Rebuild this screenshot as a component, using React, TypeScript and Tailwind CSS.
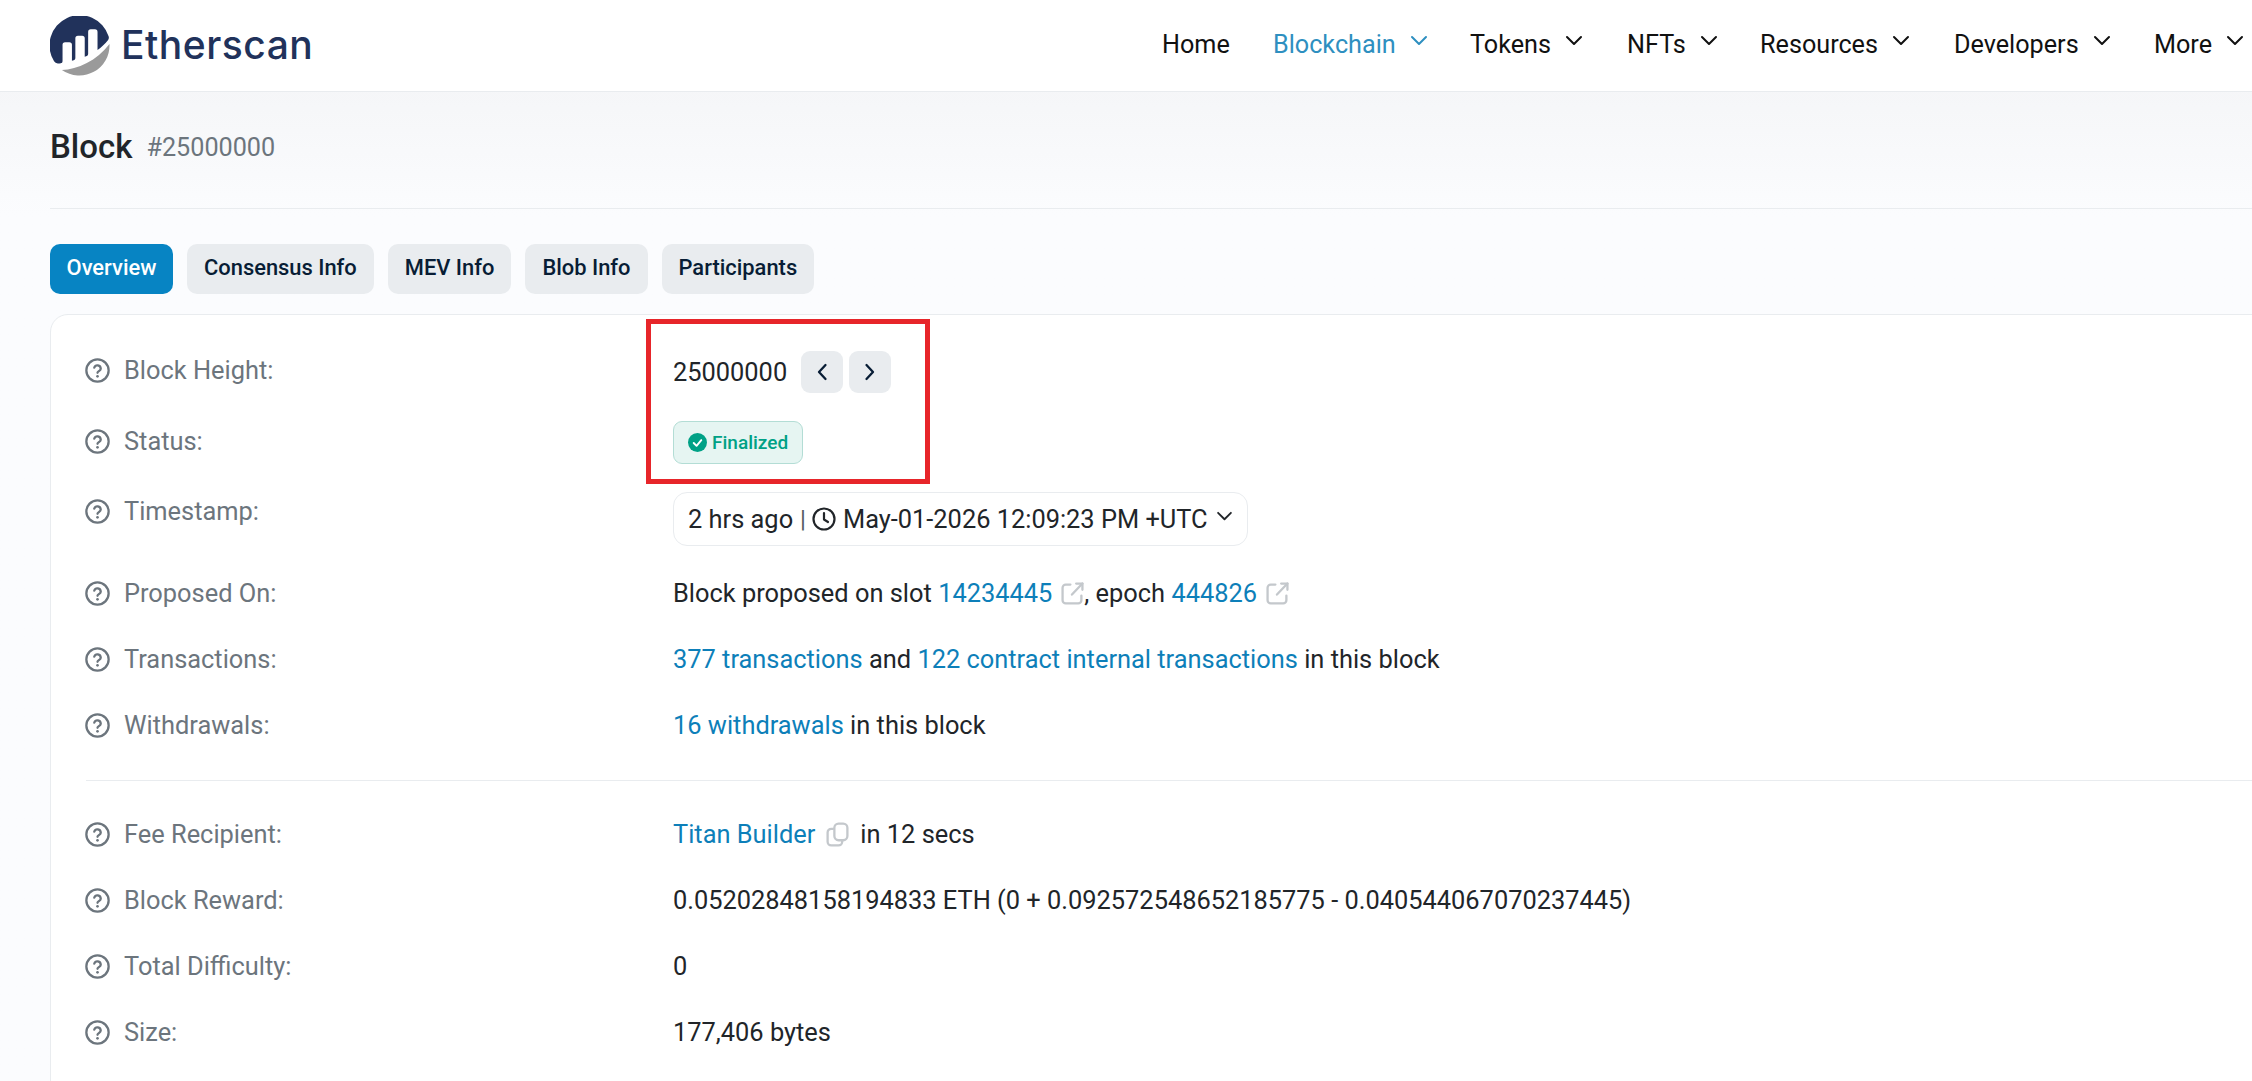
const Help = () => (
  <svg viewBox="0 0 24 24" className="w-[25px] h-[25px] shrink-0 -ml-[1px]" fill="none" stroke="#6c757d" strokeWidth="2.2" strokeLinecap="round" strokeLinejoin="round">
    <circle cx="12" cy="12" r="10.7" />
    <path d="M8.9 9.2a3.2 3.2 0 0 1 6.2 1c0 2.1-3.1 2.6-3.1 4" />
    <path d="M12 17.6h.01" strokeWidth="2.6" />
  </svg>
);

const External = () => (
  <svg viewBox="1 1 22 22" className="inline-block w-[23px] h-[23px] ml-[9px] -mt-[3px] align-middle" fill="none" stroke="#c4c8cc" strokeWidth="2.2" strokeLinecap="round" strokeLinejoin="round">
    <path d="M10 3.5H5.5a3 3 0 0 0-3 3v12a3 3 0 0 0 3 3h12a3 3 0 0 0 3-3V14" />
    <path d="M11.500 13 21.500 2.500" />
    <path d="M15.500 2.500h6v6" />
  </svg>
);

const Copy = () => (
  <svg viewBox="1 0 22 24" className="inline-block w-[23px] h-[25px] ml-[11px] mr-[11px] -mt-[3px] align-middle" fill="none" stroke="#c4c8cc" strokeWidth="2.2" strokeLinecap="round" strokeLinejoin="round">
    <rect x="9" y="1.500" width="12.500" height="16" rx="4" />
    <path d="M8 6.500H6a3.500 3.500 0 0 0-3.500 3.500v9a3.500 3.500 0 0 0 3.500 3.500h7a3.500 3.500 0 0 0 3.500-3.500v-1" />
  </svg>
);

const Chevron = ({ color = '#111' }: { color?: string }) => (
  <svg viewBox="0 0 18 12" className="w-[18px] h-[12px] mb-[6px]" fill="none" stroke={color} strokeWidth="2" strokeLinecap="round" strokeLinejoin="round">
    <path d="M2 2l7 7 7-7" />
  </svg>
);

const Logo = () => (
  <svg viewBox="0 0 121 121" className="w-[60px] h-[60px] shrink-0">
    <path
      d="M25.3 57.900a5.160 5.160 0 0 1 5.180-5.160l8.590.03a5.160 5.160 0 0 1 5.160 5.160V90.400c1-.29 2.200-.6 3.570-.92a4.400 4.400 0 0 0 3.320-4.190V45a5.160 5.160 0 0 1 5.160-5.160h8.600a5.160 5.160 0 0 1 5.160 5.160V82.400s2.150-.87 4.250-1.760a4.400 4.400 0 0 0 2.630-3.970V32.100a5.160 5.160 0 0 1 5.160-5.160h8.600a5.160 5.160 0 0 1 5.160 5.160V68.800c7.460-5.400 15-11.900 21.020-19.700a8.800 8.800 0 0 0 1.320-8.100A61 61 0 1 0 8.200 91.500a8.800 8.800 0 0 0 8.300 4.300c1.600-.14 3.700-.34 5.200-.63a4.200 4.200 0 0 0 3.600-4.200z"
      fill="#21325b"
    />
    <path d="M24 109C55 108 95 90 120 56.500A61 61 0 0 1 24 109z" fill="#9a9a9a" />
  </svg>
);

const navItems = [
  { label: 'Tokens', w: 'w-[157px]' },
  { label: 'NFTs', w: 'w-[133px]' },
  { label: 'Resources', w: 'w-[194px]' },
  { label: 'Developers', w: 'w-[200px]' },
  { label: 'More', w: 'w-[98px]' },
];

const tabs = ['Consensus Info', 'MEV Info', 'Blob Info', 'Participants'];

const Row = ({ label, h, children }: { label: string; h: string; children: React.ReactNode }) => (
  <div className={`flex items-start ${h}`}>
    <div className="w-[587px] flex items-center gap-[14px] text-[#6c757d] shrink-0 h-[30px]">
      <Help />
      <span>{label}</span>
    </div>
    <div className="text-[#212529] leading-[30px] whitespace-nowrap">{children}</div>
  </div>
);

const A = ({ children }: { children: React.ReactNode }) => <span className="text-[#0d7fb9]">{children}</span>;

export default function App() {
  return (
    <div className="relative w-[2252px] h-[1081px] overflow-hidden text-[25.4px] bg-gradient-to-b from-[#f5f6f8] from-[8%] to-[#fbfcfe] to-[20%] font-['Roboto',sans-serif]">
      <header className="h-[92px] bg-white border-b border-[#e9ecef] flex items-center justify-between pl-[50px]">
        <div className="flex items-center gap-[11px]">
          <Logo />
          <span className="text-[39px] font-medium text-[#21325b] font-['Inter',sans-serif] tracking-[0.5px]">Etherscan</span>
        </div>
        <nav className="flex items-center w-[1090px] text-[#111] text-[25.2px] mb-[2px]">
          <span className="w-[111px]">Home</span>
          <span className="w-[197px] flex items-center gap-[14px] text-[#2e8fc0]">
            Blockchain
            <Chevron color="#2e8fc0" />
          </span>
          {navItems.map((item) => (
            <span key={item.label} className={`${item.w} flex items-center gap-[14px] shrink-0`}>
              {item.label}
              <Chevron />
            </span>
          ))}
        </nav>
      </header>

      <main className="pl-[50px]">
        <div className="h-[117px] border-b border-[#e9ecef] flex items-center gap-[14px] pb-[6px]">
          <h1 className="text-[33px] font-medium text-[#212529]">Block</h1>
          <span className="text-[#6c757d] text-[25.2px] mt-[2px]">#25000000</span>
        </div>

        <div className="flex gap-[14px] mt-[35px] text-[21.9px] font-medium">
          <div className="h-[50px] w-[123px] pb-[1px] rounded-[10px] bg-[#0784c3] text-white flex items-center justify-center">Overview</div>
          {tabs.map((t) => (
            <div key={t} className="h-[50px] px-[17px] pb-[1px] rounded-[10px] bg-[#e9ecef] text-[#081d35] flex items-center justify-center">{t}</div>
          ))}
        </div>

        <section className="mt-[20px] w-[2400px] h-[900px] bg-white border border-[#e9ecef] rounded-[18px] pl-[35px] pt-[40px]">
          <Row label="Block Height:" h="h-[71px]">
            <span className="flex items-center -mt-[3px] h-[40px]">
              25000000
              <span className="ml-[14px] w-[42px] h-[42px] rounded-[9px] bg-[#e9ecef] flex items-center justify-center">
                <svg viewBox="0 0 12 18" className="w-[12px] h-[18px]" fill="none" stroke="#081d35" strokeWidth="2.300" strokeLinecap="round" strokeLinejoin="round"><path d="M9.500 2 3 9l6.500 7" /></svg>
              </span>
              <span className="ml-[6px] w-[42px] h-[42px] rounded-[9px] bg-[#e9ecef] flex items-center justify-center">
                <svg viewBox="0 0 12 18" className="w-[12px] h-[18px]" fill="none" stroke="#081d35" strokeWidth="2.300" strokeLinecap="round" strokeLinejoin="round"><path d="M2.500 2 9 9l-6.500 7" /></svg>
              </span>
            </span>
          </Row>
          <Row label="Status:" h="h-[70px]">
            <span className="inline-flex items-center gap-[5px] h-[43px] px-[14px] -mt-[5px] rounded-[9px] bg-[#e6f5f2] border border-[#b3ddd5] text-[#00a186] text-[19px] font-medium leading-none">
              <svg viewBox="0 0 20 20" className="w-[19px] h-[19px]"><circle cx="10" cy="10" r="10" fill="#00a186" /><path d="M6 10.500l3 3 5-6" fill="none" stroke="#fff" strokeWidth="2" strokeLinecap="round" strokeLinejoin="round" /></svg>
              Finalized
            </span>
          </Row>
          <Row label="Timestamp:" h="h-[82px]">
            <span className="inline-flex items-center h-[54px] px-[14px] -mt-[4px] rounded-[14px] bg-white border border-[#e9ecef]">
              2 hrs ago
              <span className="ml-[7px] mr-[6px] text-[#555b61] text-[24px]">|</span>
              <svg viewBox="0 0 24 24" className="w-[24px] h-[24px] mr-[7px]" fill="none" stroke="#212529" strokeWidth="2.200" strokeLinecap="round" strokeLinejoin="round"><circle cx="12" cy="12" r="10.500" /><path d="M12 6v6.500l4 2.500" /></svg>
              May-01-2026 12:09:23 PM +UTC
              <svg viewBox="0 0 18 12" className="w-[17px] h-[11px] ml-[8px] mb-[6px]" fill="none" stroke="#212529" strokeWidth="2" strokeLinecap="round" strokeLinejoin="round"><path d="M2 2l7 7 7-7" /></svg>
            </span>
          </Row>
          <Row label="Proposed On:" h="h-[66px]">
            Block proposed on slot <A>14234445</A><External />, epoch <A>444826</A><External />
          </Row>
          <Row label="Transactions:" h="h-[66px]">
            <A>377 transactions</A> and <A>122 contract internal transactions</A> in this block
          </Row>
          <Row label="Withdrawals:" h="h-[70px]">
            <A>16 withdrawals</A> in this block
          </Row>
          <div className="border-t border-[#e9ecef] mb-[38px]" />
          <Row label="Fee Recipient:" h="h-[66px]">
            <A>Titan Builder</A><Copy />in 12 secs
          </Row>
          <Row label="Block Reward:" h="h-[66px]">
            0.05202848158194833 ETH (0 + 0.092572548652185775 - 0.040544067070237445)
          </Row>
          <Row label="Total Difficulty:" h="h-[66px]">0</Row>
          <Row label="Size:" h="h-[66px]">177,406 bytes</Row>
        </section>
      </main>

      <div className="absolute left-[646px] top-[319px] w-[284px] h-[165px] border-[5px] border-[#e7252a]" />
    </div>
  );
}
